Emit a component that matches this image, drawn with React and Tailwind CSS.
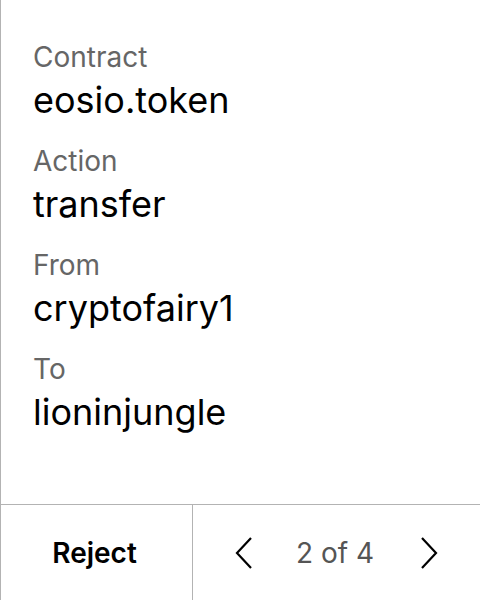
import React from 'react';

const FIELDS = [
  { label: 'Contract', value: 'eosio.token' },
  { label: 'Action', value: 'transfer' },
  { label: 'From', value: 'cryptofairy1' },
  { label: 'To', value: 'lioninjungle' },
];

function Chevron({ dir }) {
  const d = dir === 'left' ? 'M16 1 L2 16 L16 31' : 'M2 1 L16 16 L2 31';
  return (
    <svg width="18" height="32" viewBox="0 0 18 32" fill="none" stroke="#000" strokeWidth="2.2">
      <path d={d} />
    </svg>
  );
}

export default function App() {
  return (
    <div
      className="w-[480px] h-[600px] bg-white border-l border-[#b3b3b3] flex flex-col text-black"
      style={{ fontFamily: 'Inter, "Liberation Sans", sans-serif' }}
    >
      {/* Fields */}
      <div className="flex-1 pl-8 pt-[41px] flex flex-col gap-[23px]">
        {FIELDS.map((f) => (
          <div key={f.label} className="flex flex-col gap-[5px]">
            <span className="text-[28px] leading-[32px] text-[#666]">{f.label}</span>
            <span className="text-[36px] leading-[44px]">{f.value}</span>
          </div>
        ))}
      </div>

      {/* Footer */}
      <div className="h-[96px] border-t border-[#b3b3b3] flex">
        <button className="w-[192px] border-r border-[#b3b3b3] flex items-center justify-center pr-[4px] text-[28px] font-semibold">
          Reject
        </button>
        <div className="flex-1 flex items-center justify-between pl-[42px] pr-[42px]">
          <Chevron dir="left" />
          <span className="text-[28px] text-[#555] mr-[3px]">2 of 4</span>
          <Chevron dir="right" />
        </div>
      </div>
    </div>
  );
}
